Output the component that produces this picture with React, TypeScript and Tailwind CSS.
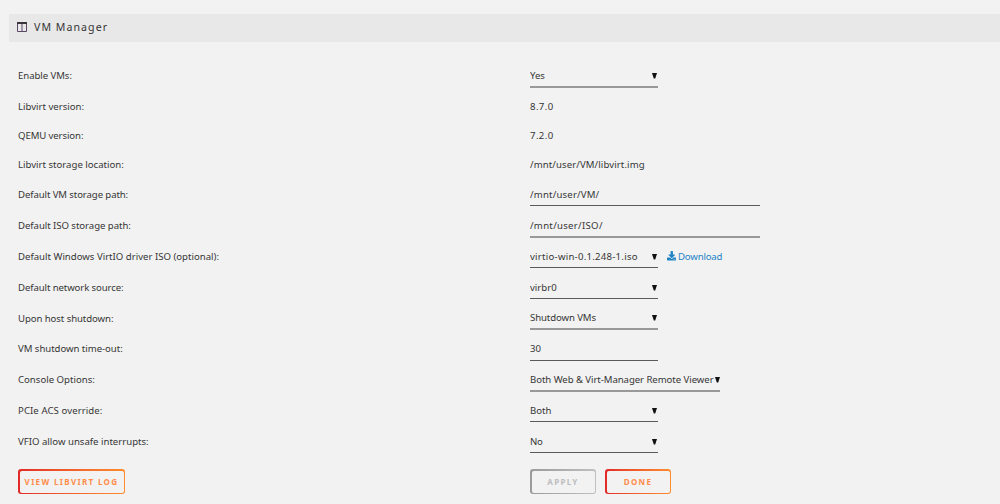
import React from 'react';
import { FaDownload } from 'react-icons/fa';

type Row = {
  label: string;
  labelClass?: string;
  rowClass: string;
  kind: 'text' | 'select' | 'input';
  value: string;
  valueClass?: string;
  fieldClass?: string;
  download?: boolean;
};

const thin = 'h-[23px] border-b border-[#5a5a5a]';
const thick = 'h-[24px] border-b-2 border-[#999]';

const rows: Row[] = [
  { label: 'Enable VMs:', labelClass: 'tracking-[-0.06px]', rowClass: 'h-[31px]', kind: 'select', value: 'Yes', fieldClass: `mt-[4px] w-[127.5px] ${thick}` },
  { label: 'Libvirt version:', rowClass: 'h-[30px]', kind: 'text', value: '8.7.0', valueClass: 'tracking-[0.4px]' },
  { label: 'QEMU version:', labelClass: 'tracking-[-0.1px]', rowClass: 'h-[29px]', kind: 'text', value: '7.2.0', valueClass: 'tracking-[0.4px]' },
  { label: 'Libvirt storage location:', rowClass: 'h-[29px]', kind: 'text', value: '/mnt/user/VM/libvirt.img', valueClass: 'tracking-[0.1px]' },
  { label: 'Default VM storage path:', labelClass: 'tracking-[-0.1px]', rowClass: 'h-[31px]', kind: 'input', value: '/mnt/user/VM/', valueClass: 'tracking-[0.18px]', fieldClass: `mt-[4px] w-[230px] ${thin}` },
  { label: 'Default ISO storage path:', labelClass: 'tracking-[-0.05px]', rowClass: 'h-[31px]', kind: 'input', value: '/mnt/user/ISO/', valueClass: 'tracking-[0.3px]', fieldClass: `mt-[4px] w-[230px] ${thick}` },
  { label: 'Default Windows VirtIO driver ISO (optional):', rowClass: 'h-[31px]', kind: 'select', value: 'virtio-win-0.1.248-1.iso', valueClass: 'tracking-[0.25px]', fieldClass: `mt-[4px] w-[127.5px] ${thin}`, download: true },
  { label: 'Default network source:', labelClass: 'tracking-[-0.1px]', rowClass: 'h-[31px]', kind: 'select', value: 'virbr0', fieldClass: `mt-[4px] w-[127.5px] ${thin}` },
  { label: 'Upon host shutdown:', labelClass: 'tracking-[-0.08px]', rowClass: 'h-[30px]', kind: 'select', value: 'Shutdown VMs', valueClass: 'tracking-[-0.1px]', fieldClass: `mt-[3px] w-[127.5px] ${thick}` },
  { label: 'VM shutdown time-out:', labelClass: 'tracking-[-0.04px]', rowClass: 'h-[31px]', kind: 'input', value: '30', valueClass: 'pb-[2px]', fieldClass: `mt-[5px] w-[127.5px] ${thin}` },
  { label: 'Console Options:', rowClass: 'h-[31px]', kind: 'select', value: 'Both Web & Virt-Manager Remote Viewer', valueClass: 'tracking-[-0.06px]', fieldClass: `mt-[4px] w-[190px] ${thick}` },
  { label: 'PCIe ACS override:', labelClass: 'tracking-[0.08px]', rowClass: 'h-[31px]', kind: 'select', value: 'Both', fieldClass: `mt-[4px] w-[127.5px] ${thin}` },
  { label: 'VFIO allow unsafe interrupts:', rowClass: 'h-[30px]', kind: 'select', value: 'No', valueClass: 'tracking-[-0.3px]', fieldClass: `mt-[4px] w-[127.5px] ${thin}` },
];

const Field: React.FC<{ row: Row }> = ({ row }) => {
  if (row.kind === 'text') {
    return <span className={`pt-[1.5px] ${row.valueClass}`}>{row.value}</span>;
  }

  return (
    <div className={`relative self-start ${row.fieldClass}`}>
      {row.kind === 'select' ? (
        <select className={`block w-full h-[22px] pt-[2px] appearance-none bg-transparent outline-none ${row.valueClass ?? ''}`}>
          <option>{row.value}</option>
        </select>
      ) : (
        <input
          type="text"
          defaultValue={row.value}
          className={`block w-full h-[22px] bg-transparent outline-none ${row.valueClass ?? ''}`}
        />
      )}
      {row.kind === 'select' && (
        <svg viewBox="0 0 5 6" className="pointer-events-none absolute right-[0.5px] top-[9px] h-[6px] w-[5px]">
          <path d="M0 0h5L3.2 5.5H1.8z" fill="#111" />
        </svg>
      )}
    </div>
  );
};

export default function App() {
  return (
    <div className="h-[504px] overflow-hidden bg-[#f2f2f2] pl-[9px] pt-[14px] font-['Noto_Sans',sans-serif] text-[9.6px] text-[#363636]">
      <header className="flex h-[27.5px] items-center bg-[#e8e8e8] pl-[8px]">
        <svg viewBox="0 0 10 10" className="mb-[2px] mr-[7px] h-[10px] w-[10px]">
          <path d="M.5 1h9v8.5h-9zM5 1v8.5" fill="none" stroke="#5b4763" />
          <path d="M0 0h10v2H0z" fill="#3a343c" />
        </svg>
        <h1 className="text-[10.6px] tracking-[1.05px]">VM Manager</h1>
      </header>

      <main className="pl-[9px] pt-[18.5px]">
        {rows.map((row) => (
          <div key={row.label} className={`flex items-center ${row.rowClass}`}>
            <label className="w-[512px] shrink-0 pt-[1.5px]">
              <span className={row.labelClass}>{row.label}</span>
            </label>
            <Field row={row} />
            {row.download && (
              <a href="#" className="ml-[9px] flex items-center gap-[2px] pt-[1.5px] text-[#1f83c6]">
                <FaDownload className="mb-[2px] h-[9.5px] w-[9.5px]" />
                <span className="tracking-[-0.17px]">Download</span>
              </a>
            )}
          </div>
        ))}

        {/* Action buttons */}
        <div className="flex pt-[13px] text-[8px] font-bold">
          <div className="w-[512px]">
            <button className="h-[25px] w-[107px] rounded-[3px] bg-linear-to-r from-[#e22828] to-[#ff8c2f] p-[1.5px]">
              <span className="flex h-full items-center justify-center rounded-[2px] bg-[#f2f2f2] tracking-[1.35px] text-[#ff8c4a]">
                VIEW LIBVIRT LOG
              </span>
            </button>
          </div>
          <button disabled className="h-[25px] w-[66px] rounded-[3px] bg-linear-to-r from-[#9b9b9b] to-[#c0c0c0] p-[1.5px]">
            <span className="flex h-full items-center justify-center rounded-[2px] bg-[#f2f2f2] tracking-[1.35px] text-[#bdbdbd]">
              APPLY
            </span>
          </button>
          <button className="ml-[9px] h-[25px] w-[66px] rounded-[3px] bg-linear-to-r from-[#e22828] to-[#ff8c2f] p-[1.5px]">
            <span className="flex h-full items-center justify-center rounded-[2px] bg-[#f2f2f2] tracking-[1.35px] text-[#ff8c4a]">
              DONE
            </span>
          </button>
        </div>
      </main>
    </div>
  );
}
